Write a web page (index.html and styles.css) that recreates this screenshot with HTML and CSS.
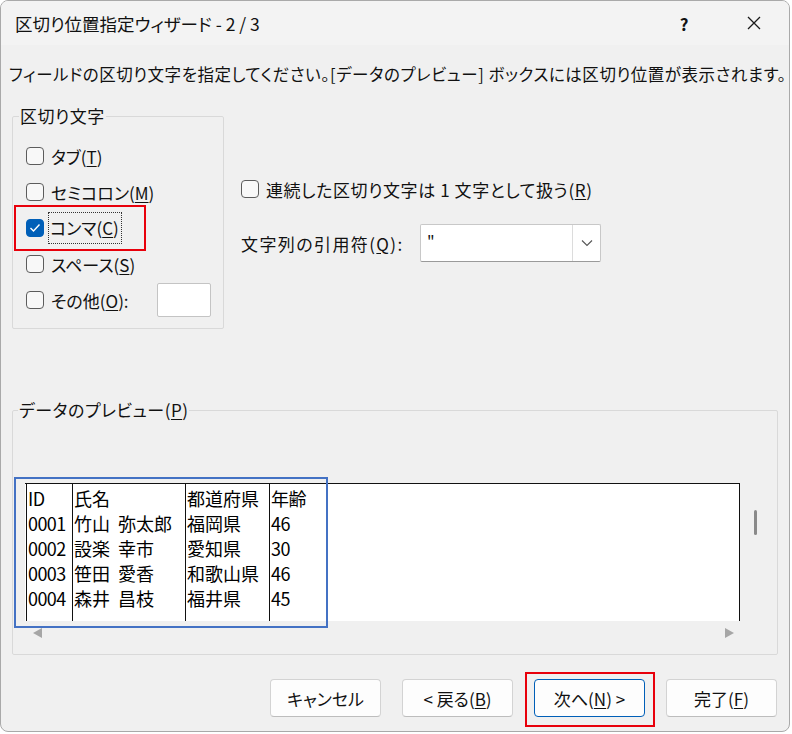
FILE: index.html
```html
<!DOCTYPE html>
<html lang="ja">
<head>
    <meta charset="UTF-8">
    <title>区切り位置指定ウィザード - 2 / 3</title>
    <link rel="stylesheet" href="styles.css">
</head>
<body>
    <div class="window">
        <div class="titlebar">
            <span class="title">区切り位置指定ウィザード - 2 / 3</span>
            <div class="title-buttons">
                <span class="tb-btn help">?</span>
                <span class="tb-btn close">
                    <svg width="16" height="16" viewBox="0 0 16 16"><path d="M2 2 L14 14 M14 2 L2 14" stroke="#1a1a1a" stroke-width="1.3" fill="none"/></svg>
                </span>
            </div>
        </div>

        <p class="instruction">フィールドの区切り文字を指定してください。[データのプレビュー] ボックスには区切り位置が表示されます。</p>

        <div class="top">
            <fieldset class="group delimiters">
                <legend>区切り文字</legend>
                <div class="check-row"><span class="box"></span><span class="label">タブ(<u>T</u>)</span></div>
                <div class="check-row"><span class="box"></span><span class="label">セミコロン(<u>M</u>)</span></div>
                <div class="check-row"><span class="box checked"><svg width="12" height="10" viewBox="0 0 12 10"><path d="M1.5 5 L4.5 8 L10.5 1.5" stroke="#fff" stroke-width="1.4" fill="none"/></svg></span><span class="label focused">コンマ(<u>C</u>)</span></div>
                <div class="check-row"><span class="box"></span><span class="label">スペース(<u>S</u>)</span></div>
                <div class="check-row"><span class="box"></span><span class="label">その他(<u>O</u>):</span><span class="other-input"></span></div>
            </fieldset>

            <div class="options">
                <div class="check-row"><span class="box"></span><span class="label wide">連続した区切り文字は 1 文字として扱う(<u>R</u>)</span></div>
                <div class="quote-row">
                    <span class="quote-label">文字列の引用符(<u>Q</u>):</span>
                    <div class="combo">
                        <span class="combo-value">"</span>
                        <span class="combo-drop">
                            <svg width="12" height="8" viewBox="0 0 12 8"><path d="M1 1.5 L6 6.5 L11 1.5" stroke="#555" stroke-width="1.1" fill="none"/></svg>
                        </span>
                    </div>
                </div>
            </div>
        </div>

        <fieldset class="group preview">
            <legend>データのプレビュー(<u>P</u>)</legend>
            <div class="preview-area">
                <div class="sheet">
                    <div class="col c1"><div>ID</div><div>0001</div><div>0002</div><div>0003</div><div>0004</div></div>
                    <div class="col c2"><div>氏名</div><div>竹山 弥太郎</div><div>設楽 幸市</div><div>笹田 愛香</div><div>森井 昌枝</div></div>
                    <div class="col c3"><div>都道府県</div><div>福岡県</div><div>愛知県</div><div>和歌山県</div><div>福井県</div></div>
                    <div class="col c4"><div>年齢</div><div>46</div><div>30</div><div>46</div><div>45</div></div>
                </div>
                <div class="vscroll"><span class="thumb"></span></div>
                <div class="hscroll">
                    <span class="arrow left"></span>
                    <span class="arrow right"></span>
                </div>
            </div>
        </fieldset>

        <div class="buttons">
            <span class="btn">キャンセル</span>
            <span class="btn">&lt; 戻る(<u>B</u>)</span>
            <span class="btn default">次へ(<u>N</u>) &gt;</span>
            <span class="btn">完了(<u>F</u>)</span>
        </div>

        <!-- annotation frames drawn over the dialog -->
        <div class="mark red comma-mark"></div>
        <div class="mark red next-mark"></div>
        <div class="mark blue sheet-mark"></div>
    </div>
</body>
</html>
```

FILE: styles.css
```css
:root {
    --face: #f0f0f0;
    --text: #111;
    --line: #d9d9d9;
    --accent: #005fb8;
}
body {
    margin: 0;
    background: #ffffff;
    font-family: "Noto Sans CJK JP", "Noto Sans", sans-serif;
    font-feature-settings: "palt";
    color: var(--text);
}
u {
    text-underline-offset: 2px;
}
.window {
    position: relative;
    width: 790px;
    height: 732px;
    box-sizing: border-box;
    border: 1px solid #a9a9a9;
    border-radius: 8px;
    background: var(--face);
    overflow: hidden;
}
.titlebar {
    display: flex;
    align-items: center;
    height: 44px;
    padding-left: 14px;
    background: #f3f3f3;
}
.title {
    font-size: 17.5px;
}
.title-buttons {
    margin-left: auto;
    display: flex;
}
.tb-btn {
    width: 70px;
    height: 44px;
    display: flex;
    align-items: center;
    justify-content: center;
}
.help {
    font-size: 17px;
    font-weight: 600;
}
.instruction {
    margin: 18px 0 0 8px;
    font-size: 16.5px;
    line-height: 22px;
    letter-spacing: 0.55px;
    white-space: nowrap;
}
.top {
    display: flex;
    margin: 21px 0 0 11px;
}
.group {
    margin: 0;
    border: 1px solid var(--line);
    border-radius: 2px;
    min-width: 0;
}
.group legend {
    font-size: 17px;
    line-height: 20px;
    padding: 0 1px;
    margin-left: -7px;
    letter-spacing: 0.5px;
}
.delimiters {
    width: 212px;
    box-sizing: border-box;
    padding: 12px 0 10px 13px;
}
.check-row {
    display: flex;
    align-items: center;
    height: 36px;
    font-size: 17px;
}
.box {
    width: 18px;
    height: 18px;
    box-sizing: border-box;
    border: 1px solid #5c5c5c;
    border-radius: 4px;
    background: #f8f8f8;
    margin-right: 7px;
    display: flex;
    align-items: center;
    justify-content: center;
    flex: none;
}
.box.checked {
    background: var(--accent);
    border-color: var(--accent);
}
.label {
    white-space: nowrap;
}
.label.wide {
    letter-spacing: 0.6px;
}
.label.focused {
    outline: 1px dotted #333;
    padding: 2px 2px 3px 1px;
    margin-left: -2px;
}
.other-input {
    margin-left: auto;
    margin-right: 12px;
    width: 54px;
    height: 34px;
    box-sizing: border-box;
    background: #fff;
    border: 1px solid #c4c4c4;
    border-radius: 2px;
}
.options {
    margin-left: 17px;
    padding-top: 65px;
}
.quote-row {
    display: flex;
    align-items: center;
    margin-top: 17px;
    font-size: 17px;
}
.quote-label {
    width: 179px;
    letter-spacing: 1.4px;
    white-space: nowrap;
}
.combo {
    display: flex;
    width: 181px;
    height: 38px;
    box-sizing: border-box;
    background: #fff;
    border: 1px solid #c8c8c8;
    border-bottom-color: #9a9a9a;
    border-radius: 2px;
}
.combo-value {
    flex: 1;
    padding: 5px 0 0 6px;
    font-size: 16px;
}
.combo-drop {
    width: 27px;
    border-left: 1px solid #dcdcdc;
    display: flex;
    align-items: center;
    justify-content: center;
}
.preview {
    width: 766px;
    box-sizing: border-box;
    margin: 71px 0 0 11px;
    padding: 63px 0 0 12px;
}
.preview-area {
    display: grid;
    grid-template-columns: 715px 1fr;
    grid-template-rows: 138px 33px;
}
.sheet {
    display: flex;
    background: #fff;
    border-top: 1px solid #111;
    border-right: 1px solid #111;
    padding-left: 1px;
    font-size: 18px;
    font-feature-settings: normal;
    line-height: 25px;
    white-space: pre;
    word-spacing: 4px;
    color: #000;
}
.col {
    border-left: 1px solid #111;
    padding: 2px 0 0 1px;
    box-sizing: border-box;
}
.c1 { width: 46px; letter-spacing: -0.6px; }
.c2 { width: 113px; }
.c3 { width: 84px; }
.c4 { flex: 1; letter-spacing: -0.6px; }
.vscroll {
    padding: 27px 0 0 14px;
}
.thumb {
    display: block;
    width: 3px;
    height: 25px;
    border-radius: 2px;
    background: #8a8a8a;
}
.hscroll {
    grid-column: 1 / 3;
    display: flex;
    justify-content: space-between;
    align-items: flex-start;
    padding: 7px 43px 0 8px;
}
.arrow {
    width: 0;
    height: 0;
    border-top: 5px solid transparent;
    border-bottom: 5px solid transparent;
}
.arrow.left {
    border-right: 9px solid #a6a6a6;
}
.arrow.right {
    border-left: 9px solid #a6a6a6;
}
.buttons {
    display: flex;
    justify-content: flex-end;
    gap: 21px;
    margin-top: 24px;
    padding-right: 12px;
}
.btn {
    width: 111px;
    height: 38px;
    box-sizing: border-box;
    display: flex;
    align-items: center;
    justify-content: center;
    background: #fdfdfd;
    border: 1px solid #d3d3d3;
    border-bottom-color: #bdbdbd;
    border-radius: 4px;
    font-size: 17px;
}
.btn.default {
    border: 1px solid var(--accent);
}
.mark {
    position: absolute;
    box-sizing: border-box;
    border: 2px solid;
}
.red {
    border-color: #e8000b;
}
.blue {
    border-color: #4472c4;
}
.comma-mark {
    left: 13px;
    top: 204px;
    width: 132px;
    height: 46px;
}
.next-mark {
    left: 524px;
    top: 671px;
    width: 130px;
    height: 55px;
}
.sheet-mark {
    left: 13px;
    top: 476px;
    width: 314px;
    height: 151px;
}
```
